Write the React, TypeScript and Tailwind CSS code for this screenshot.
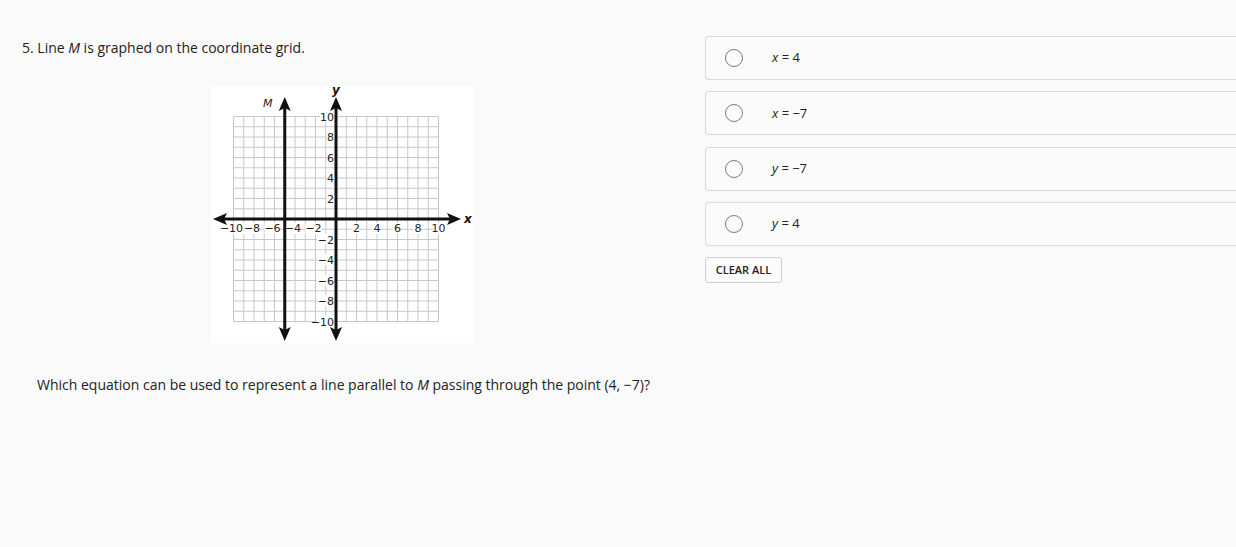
import React from "react";

const options = [
  { v: "x", rhs: "4" },
  { v: "x", rhs: "−7" },
  { v: "y", rhs: "−7" },
  { v: "y", rhs: "4" },
];

function Graph() {
  const ox = 125;
  const oy = 133;
  const u = 10.25;
  const mx = ox - 5 * u;
  const ticks = Array.from({ length: 21 }, (_, i) => i - 10);
  const labels = [-10, -8, -6, -4, -2, 2, 4, 6, 8, 10];
  const fmt = (n: number) => (n < 0 ? "−" + Math.abs(n) : String(n));
  return (
    <svg width="262" height="257" viewBox="0 0 262 257" overflow="visible" className="block overflow-visible bg-white">
      {ticks.map((t) => (
        <g key={t}>
          <line x1={ox + t * u} y1={oy - 10 * u} x2={ox + t * u} y2={oy + 10 * u} stroke="#c8c8c8" strokeWidth="1" />
          <line x1={ox - 10 * u} y1={oy + t * u} x2={ox + 10 * u} y2={oy + t * u} stroke="#c8c8c8" strokeWidth="1" />
        </g>
      ))}
      {labels.map((n) => (
        <g key={"x" + n}>
          <rect x={ox + n * u - (n < 0 ? 10 : 5)} y={oy + 4} width={n === -10 ? 22 : n < 0 ? 15 : n === 10 ? 14 : 8} height={11} fill="white" />
          <text x={ox + n * u + (n < 0 ? -2 : 0)} y={oy + 13} fontSize="11" fontFamily="'DejaVu Sans', sans-serif" textAnchor="middle" fill="#222">
            {fmt(n)}
          </text>
        </g>
      ))}
      {labels.map((n) => (
        <g key={"y" + n}>
          <rect x={ox - (n < 0 ? 19 : n === 10 ? 16 : 9)} y={oy - n * u - 6} width={n < 0 ? 18 : n === 10 ? 15 : 8} height={11} fill="white" />
          <text x={ox - 2} y={oy - n * u + 4} fontSize="11" fontFamily="'DejaVu Sans', sans-serif" textAnchor="end" fill="#222">
            {fmt(n)}
          </text>
        </g>
      ))}
      {/* x axis */}
      <line x1="10" y1={oy} x2="242" y2={oy} stroke="#111" strokeWidth="3" />
      <polygon points={`2,${oy} 16,${oy - 6} 13,${oy} 16,${oy + 6}`} fill="#111" />
      <polygon points={`250,${oy} 236,${oy - 6} 239,${oy} 236,${oy + 6}`} fill="#111" />
      {/* y axis */}
      <line x1={ox} y1="18" x2={ox} y2="247" stroke="#111" strokeWidth="3" />
      <polygon points={`${ox},11 ${ox - 6},25 ${ox},22 ${ox + 6},25`} fill="#111" />
      <polygon points={`${ox},255 ${ox - 6},241 ${ox},244 ${ox + 6},241`} fill="#111" />
      {/* line M */}
      <line x1={mx} y1="18" x2={mx} y2="247" stroke="#111" strokeWidth="3" />
      <polygon points={`${mx},11 ${mx - 6},25 ${mx},22 ${mx + 6},25`} fill="#111" />
      <polygon points={`${mx},255 ${mx - 6},241 ${mx},244 ${mx + 6},241`} fill="#111" />
      <text x="52" y="21" fontSize="11" fontStyle="italic" fontFamily="'DejaVu Sans', sans-serif" fill="#222">M</text>
      <text x={ox - 4} y="8" fontSize="12" fontStyle="italic" fontWeight="bold" fontFamily="'DejaVu Sans', sans-serif" fill="#111">y</text>
      <text x="253" y={oy + 4} fontSize="12" fontStyle="italic" fontWeight="bold" fontFamily="'DejaVu Sans', sans-serif" fill="#111">x</text>
    </svg>
  );
}

export default function App(): React.JSX.Element {
  return (
    <div className="min-h-[547px] w-[1236px] overflow-hidden bg-[#fafafa] font-['Open_Sans',sans-serif] text-[#222]">
      <div className="flex">
        <div className="w-[705px] shrink-0 pl-[22px] pt-[38px]">
          <p className="text-[14px] leading-[20px]">
            5. Line <i>M</i> is graphed on the coordinate grid.
          </p>
          <div className="ml-[189px] mt-[28px]">
            <Graph />
          </div>
          <p className="ml-[15px] mt-[32px] text-[14px] leading-[20px]">
            Which equation can be used to represent a line parallel to <i>M</i> passing through the point (4, −7)?
          </p>
        </div>
        <div className="flex flex-1 flex-col gap-[11.33px] pt-[36px]">
          {options.map((o, i) => (
            <div
              key={i}
              className="flex h-[44px] items-center rounded-l-[4px] border border-r-0 border-[#d9d9d9] bg-[#fbfbfb]"
            >
              <span className="ml-[19px] h-[18px] w-[18px] rounded-full border-[1.5px] border-[#7a7a7a]" />
              <span className="ml-[29px] text-[13px]">
                <i>{o.v}</i> = {o.rhs}
              </span>
            </div>
          ))}
          <button className="h-[26px] w-[77px] rounded-[3px] border border-[#cfcfcf] bg-[#fbfbfb] text-[11px] font-semibold text-[#222]">
            CLEAR ALL
          </button>
        </div>
      </div>
    </div>
  );
}
